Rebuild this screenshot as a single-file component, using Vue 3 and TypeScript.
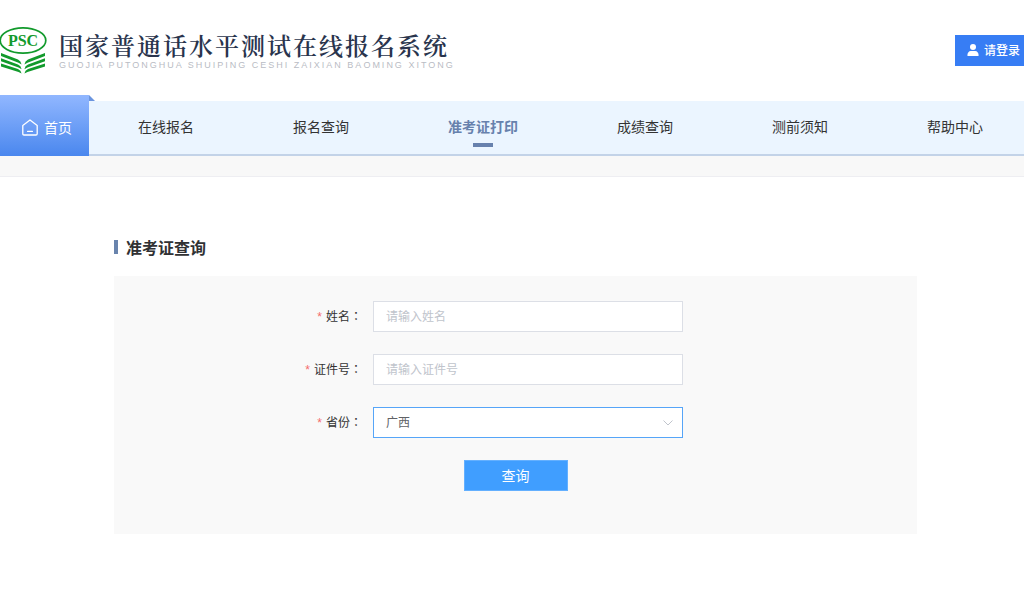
<script setup lang="ts">
import { ref } from 'vue'

interface NavItem {
  label: string
  active?: boolean
}

const navItems: NavItem[] = [
  { label: '在线报名' },
  { label: '报名查询' },
  { label: '准考证打印', active: true },
  { label: '成绩查询' },
  { label: '测前须知' },
  { label: '帮助中心' },
]

const name = ref('')
const idNumber = ref('')
const province = ref('广西')
</script>

<template>
  <div class="page">
    <header class="header">
      <svg class="logo" width="48" height="48" viewBox="0 0 48 48" aria-hidden="true">
        <ellipse cx="23" cy="14.5" rx="22.8" ry="12.6" fill="#fff" stroke="#129a2c" stroke-width="1.7" />
        <text x="23" y="20" text-anchor="middle" class="logo-text">PSC</text>
        <g fill="#129a2c">
          <path d="M1 27 L18 33.6 Q21 35 21.6 38.6 L18.5 36.8 L1 30 Z" />
          <path d="M1 32.2 L18 38.6 Q21 40 21.6 43.2 L18.5 41.6 L1 35.2 Z" />
          <path d="M1 37.4 L18 43 Q21 44.4 21.6 47.4 L18.5 46 L1 40.4 Z" />
          <path d="M45 27 L28 33.6 Q25 35 24.4 38.6 L27.5 36.8 L45 30 Z" />
          <path d="M45 32.2 L28 38.6 Q25 40 24.4 43.2 L27.5 41.6 L45 35.2 Z" />
          <path d="M45 37.4 L28 43 Q25 44.4 24.4 47.4 L27.5 46 L45 40.4 Z" />
        </g>
      </svg>
      <div class="brand">
        <h1 class="brand-title">国家普通话水平测试在线报名系统</h1>
        <p class="brand-sub">GUOJIA PUTONGHUA SHUIPING CESHI ZAIXIAN BAOMING XITONG</p>
      </div>
      <button type="button" class="login">
        <svg width="12" height="12" viewBox="0 0 12 12" fill="#fff" aria-hidden="true">
          <circle cx="6" cy="3" r="3" />
          <path d="M0.8 12 Q0.3 12 0.4 11 Q0.8 7.3 3.8 7 H8.2 Q11.2 7.3 11.6 11 Q11.7 12 11.2 12 Z" />
        </svg>
        <span>请登录</span>
      </button>
    </header>

    <nav class="nav">
      <a href="#" class="home">
        <svg width="16" height="17" viewBox="0 0 16 17" fill="none" stroke="#fff" stroke-width="1.3" stroke-linejoin="round" stroke-linecap="round" aria-hidden="true">
          <path d="M0.8 6.4 L8 0.9 L15.2 6.4 V14.8 Q15.2 16 14 16 H2 Q0.8 16 0.8 14.8 Z" />
          <path d="M5.6 12.4 H10.4" />
        </svg>
        <span>首页</span>
      </a>
      <div class="links">
        <a v-for="item in navItems" :key="item.label" href="#" class="link" :class="{ active: item.active }">{{ item.label }}</a>
      </div>
    </nav>
    <div class="strip"></div>

    <main class="main">
      <h2 class="heading">准考证查询</h2>
      <form class="panel" @submit.prevent>
        <div class="row">
          <label for="name"><span class="star">*</span>姓名<span class="colon">：</span></label>
          <input id="name" v-model="name" class="field" type="text" placeholder="请输入姓名" />
        </div>
        <div class="row">
          <label for="idno"><span class="star">*</span>证件号<span class="colon">：</span></label>
          <input id="idno" v-model="idNumber" class="field" type="text" placeholder="请输入证件号" />
        </div>
        <div class="row">
          <label for="province"><span class="star">*</span>省份<span class="colon">：</span></label>
          <div class="select-wrap">
            <select id="province" v-model="province" class="field select">
              <option>广西</option>
            </select>
            <svg class="chevron" width="10" height="6" viewBox="0 0 10 6" fill="none" stroke="#c0c4cc" aria-hidden="true">
              <path d="M0.5 0.5 L5 5 L9.5 0.5" />
            </svg>
          </div>
        </div>
        <button type="submit" class="submit">查询</button>
      </form>
    </main>
  </div>
</template>

<style>
body {
  margin: 0;
  background: #fff;
}
</style>

<style scoped>
.page {
  font-family: "Liberation Sans", "Noto Sans CJK SC", sans-serif;
  font-size: 14px;
  color: #333;
}
.header {
  display: flex;
  align-items: flex-start;
  height: 95px;
}
.logo {
  flex: none;
  margin-top: 26px;
}
.logo-text {
  font-family: "Liberation Serif", serif;
  font-size: 16px;
  font-weight: 700;
  fill: #129a2c;
}
.brand {
  flex: 1;
  margin: 31px 0 0 11px;
  white-space: nowrap;
}
.brand-title {
  margin: 0;
  font-family: "Noto Serif CJK SC", "Noto Sans CJK SC", serif;
  font-size: 24px;
  font-weight: 600;
  line-height: 28px;
  letter-spacing: 2px;
  color: #29344d;
}
.brand-sub {
  margin: 1px 0 0;
  font-size: 9px;
  line-height: 10px;
  letter-spacing: 2px;
  color: #b9bcc4;
}
.login {
  display: flex;
  align-items: center;
  gap: 5px;
  height: 31px;
  margin: 35px 0 0;
  padding: 0 4px 2px 12px;
  border: 0;
  background: #377df4;
  color: #fff;
  font-family: inherit;
  font-size: 12px;
  font-weight: 500;
  white-space: nowrap;
}
.nav {
  display: flex;
  align-items: flex-end;
}
.home {
  position: relative;
  display: flex;
  flex: none;
  align-items: center;
  gap: 6px;
  box-sizing: border-box;
  width: 89px;
  height: 61px;
  padding: 3px 0 0 22px;
  background: linear-gradient(#91b7ff, #4a87ee);
  color: #fff;
  text-decoration: none;
}
.home::after {
  content: "";
  position: absolute;
  top: 0;
  left: 100%;
  border-bottom: 6px solid #6b95df;
  border-right: 6px solid transparent;
}
.links {
  display: flex;
  flex: 1;
  justify-content: space-between;
  box-sizing: border-box;
  height: 55px;
  padding: 0 41px 0 49px;
  border-bottom: 2px solid #c3d3e8;
  background: #ebf5ff;
}
.link {
  position: relative;
  line-height: 52px;
  color: #333;
  text-decoration: none;
}
.active {
  color: #6781ad;
  font-weight: 700;
}
.active::after {
  content: "";
  position: absolute;
  bottom: 7px;
  left: 50%;
  width: 20px;
  height: 4px;
  margin-left: -10px;
  background: #6781ad;
}
.strip {
  height: 20px;
  border-bottom: 1px solid #eeeef2;
  background: #f8f8f8;
}
.main {
  padding: 60px 107px 0 114px;
}
.heading {
  display: flex;
  align-items: center;
  gap: 8px;
  margin: 0 0 15px;
  font-size: 16px;
  line-height: 24px;
  color: #303133;
}
.heading::before {
  content: "";
  width: 4px;
  height: 14px;
  margin-bottom: 4px;
  background: #6984ad;
}
.panel {
  display: flex;
  flex-direction: column;
  gap: 22px;
  padding: 25px 0 43px;
  background: #f9f9f9;
}
.row {
  display: flex;
  align-items: center;
  padding-right: 234px;
}
.row label {
  flex: 1;
  padding: 0 11px 2px 0;
  text-align: right;
  font-size: 12px;
}
.star {
  margin-right: 4px;
  color: #f56c6c;
}
.colon {
  font-family: "Noto Sans CJK TC", sans-serif;
}
.field {
  box-sizing: border-box;
  width: 310px;
  height: 31px;
  padding: 0 12px;
  border: 1px solid #dcdfe6;
  border-radius: 0;
  background: #fff;
  color: #606266;
  font-family: inherit;
  font-size: 12px;
}
.field::placeholder {
  color: #c0c4cc;
}
.select-wrap {
  position: relative;
  display: flex;
}
.select {
  appearance: none;
  border-color: #56a5f8;
}
.chevron {
  position: absolute;
  top: 13px;
  right: 10px;
  pointer-events: none;
}
.submit {
  align-self: center;
  width: 104px;
  height: 31px;
  padding: 0 0 2px;
  border: 1px solid #64b0ff;
  background: #409eff;
  color: #fff;
  font-family: inherit;
  font-size: 14px;
}
</style>
